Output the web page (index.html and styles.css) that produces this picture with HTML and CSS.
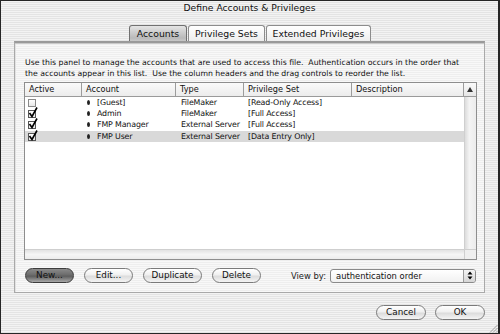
FILE: index.html
```html
<!DOCTYPE html>
<html>
<head>
<meta charset="utf-8">
<link rel="stylesheet" href="styles.css">
</head>
<body>
<div class="window">
  <div class="titlebar">Define Accounts &amp; Privileges</div>
  <div class="tabs">
    <div class="tab selected t1">Accounts</div>
    <div class="tab t2">Privilege Sets</div>
    <div class="tab t3">Extended Privileges</div>
  </div>
  <div class="panel">
    <p class="intro">Use this panel to manage the accounts that are used to access this file.&nbsp; Authentication occurs in the order that<br>the accounts appear in this list.&nbsp; Use the column headers and the drag controls to reorder the list.</p>
    <div class="list">
      <div class="header">
        <div class="hcell c1">Active</div>
        <div class="hcell c2">Account</div>
        <div class="hcell c3">Type</div>
        <div class="hcell c4">Privilege Set</div>
        <div class="hcell c5">Description</div>
      </div>
      <div class="vscroll-top"><span class="arrow-up"></span></div>
      <div class="rows">
        <div class="row">
          <div class="cell c1"><span class="cb"></span></div>
          <div class="cell c2"><span class="drag"></span>[Guest]</div>
          <div class="cell c3">FileMaker</div>
          <div class="cell c4">[Read-Only Access]</div>
          <div class="cell c5"></div>
        </div>
        <div class="row">
          <div class="cell c1"><span class="cb checked"><svg width="10" height="11" viewBox="0 0 10 11"><path d="M1.5 6 L4 9.5 L9 0.5" fill="none" stroke="#000" stroke-width="1.6"/></svg></span></div>
          <div class="cell c2"><span class="drag"></span>Admin</div>
          <div class="cell c3">FileMaker</div>
          <div class="cell c4">[Full Access]</div>
          <div class="cell c5"></div>
        </div>
        <div class="row">
          <div class="cell c1"><span class="cb checked"><svg width="10" height="11" viewBox="0 0 10 11"><path d="M1.5 6 L4 9.5 L9 0.5" fill="none" stroke="#000" stroke-width="1.6"/></svg></span></div>
          <div class="cell c2"><span class="drag"></span>FMP Manager</div>
          <div class="cell c3">External Server</div>
          <div class="cell c4">[Full Access]</div>
          <div class="cell c5"></div>
        </div>
        <div class="row sel">
          <div class="cell c1"><span class="cb checked"><svg width="10" height="11" viewBox="0 0 10 11"><path d="M1.5 6 L4 9.5 L9 0.5" fill="none" stroke="#000" stroke-width="1.6"/></svg></span></div>
          <div class="cell c2"><span class="drag"></span>FMP User</div>
          <div class="cell c3">External Server</div>
          <div class="cell c4">[Data Entry Only]</div>
          <div class="cell c5"></div>
        </div>
      </div>
      <div class="vtrack"></div>
      <div class="htrack"></div>
      <div class="corner"></div>
    </div>
    <div class="actions">
      <button class="btn pressed w49">New...</button>
      <button class="btn w49">Edit...</button>
      <button class="btn w59">Duplicate</button>
      <button class="btn w49">Delete</button>
      <div class="viewby">
        <span class="label">View by:</span>
        <div class="select"><span>authentication order</span><span class="stepper"><svg width="6" height="9" viewBox="0 0 6 9"><path d="M3 0.5 L5.5 3.5 L0.5 3.5 Z M3 8.5 L5.5 5.5 L0.5 5.5 Z" fill="#000"/></svg></span></div>
      </div>
    </div>
  </div>
  <div class="footer">
    <button class="btn w50">Cancel</button>
    <button class="btn w50">OK</button>
  </div>
  <svg class="grip" width="10" height="10" viewBox="0 0 10 10"><path d="M9.5 2 L2 9.5 M9.5 5 L5 9.5 M9.5 8 L8 9.5" stroke="#888" stroke-width="0.8"/></svg>
</div>
</body>
</html>
```

FILE: styles.css
```css
* { box-sizing: border-box; }
html, body { margin: 0; padding: 0; background: #2b2b2b; }
body { width: 500px; height: 334px; overflow: hidden; font-family: "DejaVu Sans", "Liberation Sans", sans-serif; color: #000; }

.window {
  position: relative;
  width: 500px; height: 334px;
  border: 1px solid #262626;
  border-right-width: 2px;
  background: repeating-linear-gradient(to bottom, #f3f3f3 0px, #f3f3f3 1px, #e4e4e4 1px, #e4e4e4 2px);
  display: flex; flex-direction: column;
}

.titlebar {
  height: 15px;
  text-align: center;
  font-size: 9.2px;
  line-height: 14px;
  color: #111;
}

.tabs {
  display: flex; justify-content: center;
  margin-top: 9px;
  height: 16px;
  padding-left: 1px;
  gap: 1px;
}
.tab {
  height: 16px;
  font-size: 9.3px;
  line-height: 15px;
  text-align: center;
  border: 1px solid #8c8c8c;
  border-bottom: none;
  border-radius: 3px 3px 0 0;
  background: linear-gradient(#ffffff, #ededed);
  color: #111;
}
.t1 { width: 58px; }
.t2 { width: 77px; }
.t3 { width: 105px; }
.tab.selected {
  background: linear-gradient(#e4e4e4, #b9b9b9 80%, #c8c8c8);
  border-color: #707070;
}

.panel {
  margin: 0 13px 0 13px;
  height: 252px;
  border: 1px solid #a9a9a9;
  border-top: 2px solid #9a9a9a;
  box-shadow: inset 0 1px 0 #c9c9c9, inset 1px 0 0 #e2e2e2;
  background: repeating-linear-gradient(to bottom, #f8f8f8 0px, #f8f8f8 1px, #eeeeee 1px, #eeeeee 2px);
  padding: 14px 8px 0 9px;
  display: flex; flex-direction: column;
}

.intro {
  margin: 0 0 3px 1px;
  font-size: 7.75px;
  line-height: 11px;
  white-space: nowrap;
  color: #111;
}

.list {
  display: grid;
  grid-template-columns: 439px 12px;
  grid-template-rows: 14px 152px 10px;
  width: 453px; height: 178px;
  border: 1px solid #8e8e8e;
  background: #fff;
}
.header {
  display: flex;
  background: linear-gradient(#fafafa, #ececec);
  border-bottom: 1px solid #9a9a9a;
}
.hcell {
  font-size: 8.2px;
  line-height: 13px;
  padding-left: 4px;
  border-right: 1px solid #9c9c9c;
  color: #111;
}
.c1 { width: 57px; }
.c2 { width: 94px; }
.c3 { width: 68px; }
.c4 { width: 108px; }
.c5 { width: 112px; }

.vscroll-top {
  background: linear-gradient(#fafafa, #e6e6e6);
  border-bottom: 1px solid #9a9a9a;
  display: flex; align-items: center; justify-content: center;
}
.arrow-up {
  width: 0; height: 0;
  border-left: 3px solid transparent;
  border-right: 3px solid transparent;
  border-bottom: 5px solid #333;
}

.rows { background: #fff; }
.row { display: flex; height: 11px; }
.row.sel { background: #d9d9d9; margin-top: 1px; }
.cell {
  font-size: 7.9px;
  letter-spacing: -0.15px;
  line-height: 11px;
  padding-left: 5px;
  white-space: nowrap;
  color: #111;
  display: flex; align-items: center;
}
.cell.c1 { padding-left: 3px; }
.cell.c2 { padding-left: 5px; }
.cell.c4 { padding-left: 4px; }

.cb {
  position: relative;
  width: 8px; height: 8px;
  border: 1px solid #8a8a8a;
  background: linear-gradient(#fff, #e8e8e8);
  margin-top: 1px;
}
.cb.checked { border-color: #555; }
.cb svg { position: absolute; left: -1px; top: -4px; }

.drag {
  display: inline-block;
  width: 3px; height: 5px;
  background: #222;
  border-radius: 50%;
  margin-right: 7px;
}

.vtrack {
  background: linear-gradient(to right, #dcdcdc, #f4f4f4 40%, #ececec);
  border-left: 1px solid #cfcfcf;
}
.htrack {
  background: linear-gradient(#e2e2e2, #f5f5f5 50%, #ececec);
  border-top: 1px solid #cfcfcf;
}
.corner { background: #efefef; border-top: 1px solid #cfcfcf; border-left: 1px solid #cfcfcf; }

.actions {
  display: flex; align-items: center;
  margin-top: 8px;
  height: 15px;
  padding-left: 1px;
  gap: 10px;
}
.btn {
  height: 15px;
  padding: 0;
  border: 1px solid #7a7a7a;
  border-radius: 8px;
  background: linear-gradient(#ffffff, #f0f0f0 45%, #dcdcdc 55%, #f4f4f4);
  font-family: "DejaVu Sans", "Liberation Sans", sans-serif;
  font-size: 8.8px;
  line-height: 13px;
  color: #111;
  text-align: center;
}
.btn.pressed {
  background: linear-gradient(#8a8a8a, #6c6c6c 45%, #5d5d5d 55%, #a8a8a8);
  border-color: #3c3c3c;
}
.w49 { width: 49px; }
.w50 { width: 50px; }
.w59 { width: 59px; }

.viewby {
  margin-left: auto;
  display: flex; align-items: center;
  gap: 4px;
}
.label { font-size: 8.4px; color: #222; }
.select {
  width: 146px; height: 14px;
  border: 1px solid #8a8a8a;
  border-radius: 3px;
  background: linear-gradient(#ffffff, #f1f1f1);
  display: flex; align-items: center; justify-content: space-between;
  padding-left: 5px;
  font-size: 8.4px;
  color: #111;
}
.stepper {
  width: 12px; height: 12px;
  border-left: 1px solid #9a9a9a;
  background: linear-gradient(#f4f4f4, #d6d6d6);
  display: flex; align-items: center; justify-content: center;
  border-radius: 0 2px 2px 0;
}

.footer {
  display: flex; justify-content: flex-end;
  gap: 9px;
  margin: 12px 13px 0 0;
}

.grip { position: absolute; right: 0; bottom: 0; }
```
